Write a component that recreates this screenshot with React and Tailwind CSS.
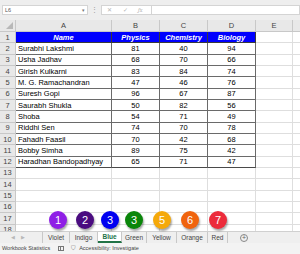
const students = [
  ['Surabhi Lakshmi', 81, 40, 94],
  ['Usha Jadhav', 68, 70, 66],
  ['Girish Kulkarni', 83, 84, 74],
  ['M. G. Ramachandran', 47, 46, 76],
  ['Suresh Gopi', 96, 67, 87],
  ['Saurabh Shukla', 50, 82, 56],
  ['Shoba', 54, 71, 49],
  ['Riddhi Sen', 74, 70, 78],
  ['Fahadh Faasil', 70, 42, 68],
  ['Bobby Simha', 89, 75, 42],
  ['Haradhan Bandopadhyay', 65, 71, 47],
];

const columns = [
  { key: 'A', w: 'w-[96px]' },
  { key: 'B', w: 'w-[48px]' },
  { key: 'C', w: 'w-[48px]' },
  { key: 'D', w: 'w-[48px]' },
  { key: 'E', w: 'w-[37px]' },
];

const badges = [
  { n: 1, pos: 'left-[49px]', bg: 'bg-[#8f1fe6]' },
  { n: 2, pos: 'left-[76px]', bg: 'bg-[#4a0c80]' },
  { n: 3, pos: 'left-[101px]', bg: 'bg-[#0000f0]' },
  { n: 3, pos: 'left-[125px]', bg: 'bg-[#0a860a]' },
  { n: 5, pos: 'left-[153px]', bg: 'bg-[#f5a90a]' },
  { n: 6, pos: 'left-[181px]', bg: 'bg-[#f0640e]' },
  { n: 7, pos: 'left-[209px]', bg: 'bg-[#ec2b3b]' },
];

const tabs = [
  { name: 'Violet', w: 'w-[27px]' },
  { name: 'Indigo', w: 'w-[28px]' },
  { name: 'Blue', w: 'w-[24px]', active: true },
  { name: 'Green', w: 'w-[25px]' },
  { name: 'Yellow', w: 'w-[30px]' },
  { name: 'Orange', w: 'w-[31px]' },
  { name: 'Red', w: 'w-[20px]' },
];

function HeaderRow() {
  return (
    <div className="flex h-[12px] bg-[#e8e8e8]">
      <div className="w-[16px] h-full border-r border-b border-[#c8c8c8] relative">
        <div className="absolute right-[2px] bottom-[2px] w-0 h-0 border-l-[7px] border-l-transparent border-b-[7px] border-b-[#b8b8b8]" />
      </div>
      {columns.map(c => (
        <div key={c.key} className={`${c.w} h-full border-r border-b border-[#c8c8c8] flex items-center justify-center text-[7.5px] text-[#444]`}>{c.key}</div>
      ))}
      <div className="flex-1 h-full border-b border-[#c8c8c8]" />
    </div>
  );
}

function SheetRow({ num, data, head, last }) {
  const inTable = head || data;
  const dark = last ? 'border-b-[#4a4a4a]' : inTable ? 'border-b-[#6a6a6a]' : 'border-b-[#dedede]';
  return (
    <div className="flex h-[11.33px]">
      <div className="w-[16px] h-full bg-[#e8e8e8] border-r border-b border-[#c8c8c8] flex items-center justify-center text-[7.5px] text-[#444]">{num}</div>
      {head ? (
        ['Name', 'Physics', 'Chemistry', 'Biology'].map((t, i) => (
          <div key={t} className={`${columns[i].w} h-full bg-[#0000ff] border-r border-b border-[#3a3a3a] flex items-center justify-center text-white font-bold italic text-[7.5px]`}>{t}</div>
        ))
      ) : data ? (
        data.map((v, i) => (
          <div key={i} className={`${columns[i].w} h-full border-r border-b border-r-[#6a6a6a] ${dark} flex items-center text-[7.5px] text-black ${i === 0 ? 'pl-[2px]' : 'justify-center'}`}>{v}</div>
        ))
      ) : (
        columns.slice(0, 4).map(c => (
          <div key={c.key} className={`${c.w} h-full border-r border-b border-[#dedede]`} />
        ))
      )}
      <div className="w-[37px] h-full border-r border-b border-[#dedede]" />
      <div className="flex-1 h-full border-b border-[#dedede]" />
    </div>
  );
}

export default function App() {
  const sheetRows = [];
  for (let r = 1; r <= 18; r++) {
    sheetRows.push(
      <SheetRow
        key={r}
        num={r}
        head={r === 1}
        data={r >= 2 && r <= 12 ? students[r - 2] : null}
        last={r === 12}
      />
    );
  }

  return (
    <div className="relative w-[300px] h-[254px] overflow-hidden bg-white flex flex-col" style={{ fontFamily: '"Liberation Sans", Arial, sans-serif' }}>
      {/* formula bar */}
      <div className="h-[20px] bg-[#eeeeee] pt-[5px] flex items-start">
        <div className="ml-[2px] w-[86px] h-[10px] bg-white border border-[#d4d4d4] flex items-center justify-between px-[2px]">
          <span className="text-[5.5px] text-[#555]">L6</span>
          <span className="text-[5px] text-[#777] leading-none">▾</span>
        </div>
        <div className="w-[13px] h-[10px] flex items-center justify-center text-[7px] text-[#999]">⋮</div>
        <div className="w-[51px] h-[10px] bg-white border border-[#d4d4d4] flex items-center text-[6px] text-[#b4b4b4]">
          <span className="ml-[5px]">✕</span>
          <span className="ml-[11px]">✓</span>
          <span className="ml-[10px] italic font-serif">fx</span>
        </div>
        <div className="flex-1 h-[10px] bg-white border border-l-0 border-[#d4d4d4]" />
      </div>

      {/* grid */}
      <div className="h-[211px] overflow-hidden">
        <HeaderRow />
        {sheetRows}
      </div>

      {/* sheet tabs */}
      <div className="h-[12px] bg-[#efefef] border-t border-[#d0d0d0] flex items-stretch text-[6.5px] text-[#444]">
        <div className="w-[43px] flex items-center gap-[6px] pl-[11px] text-[5px] text-[#b8b8b8] border-r border-[#c8c8c8]">
          <span>◀</span>
          <span>▶</span>
        </div>
        {tabs.map(t => (
          <div
            key={t.name}
            className={`${t.w} flex items-center justify-center border-r border-[#c8c8c8] ${t.active ? 'bg-white text-[#217346] font-bold border-b-2 border-b-[#217346]' : ''}`}
          >
            {t.name}
          </div>
        ))}
        <div className="ml-[12px] flex items-center">
          <span className="w-[8px] h-[8px] rounded-full border border-[#888] flex items-center justify-center text-[7px] leading-none text-[#666]">+</span>
        </div>
      </div>

      {/* status bar */}
      <div className="h-[11px] bg-[#f3f3f3] flex items-center text-[5.5px] text-[#444] pl-[2px]">
        <span>Workbook Statistics</span>
        <span className="ml-[8px] w-[6px] h-[5px] border border-[#777] grid grid-cols-2">
          <span className="border-r border-[#777]" />
        </span>
        <span className="ml-[7px] text-[#666] text-[6px]">⛉</span>
        <span className="ml-[3px]">Accessibility: Investigate</span>
      </div>

      {/* shapes on the sheet */}
      {badges.map((b, i) => (
        <div
          key={i}
          className={`absolute top-[211px] ${b.pos} w-[18px] h-[18px] rounded-full ${b.bg} shadow-[1px_2px_2px_rgba(0,0,0,0.35)] flex items-center justify-center text-white text-[11px]`}
        >
          {b.n}
        </div>
      ))}
    </div>
  );
}
